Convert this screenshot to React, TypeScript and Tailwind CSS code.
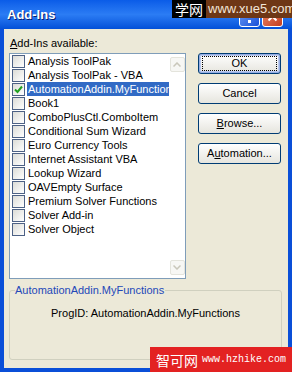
import React from "react";

const items = [
  "Analysis ToolPak",
  "Analysis ToolPak - VBA",
  "AutomationAddin.MyFunctions",
  "Book1",
  "ComboPlusCtl.ComboItem",
  "Conditional Sum Wizard",
  "Euro Currency Tools",
  "Internet Assistant VBA",
  "Lookup Wizard",
  "OAVEmpty Surface",
  "Premium Solver Functions",
  "Solver Add-in",
  "Solver Object",
];

function CheckBox({ checked }: { checked?: boolean }) {
  return (
    <div className="w-[13px] h-[13px] shrink-0 border border-[#4d6185] bg-gradient-to-br from-[#dcdcd7] to-white flex items-center justify-center">
      {checked && (
        <svg width="9" height="9" viewBox="0 0 9 9">
          <path d="M1 4.5 L3.5 7 L8 1.5" stroke="#21a121" strokeWidth="2" fill="none" />
        </svg>
      )}
    </div>
  );
}

function XpButton({ children, primary }: { children: React.ReactNode; primary?: boolean }) {
  return (
    <div
      className={`h-[21px] w-[83px] rounded-[3px] border border-[#003c74] bg-gradient-to-b from-white to-[#e6e5de] flex items-center justify-center text-[11px] text-black ${
        primary ? "shadow-[inset_0_0_0_1px_#97aee2,inset_0_0_0_2px_#bccbef]" : ""
      }`}
    >
      {primary ? (
        <div className="w-[75px] h-[15px] border border-dotted border-black flex items-center justify-center">
          {children}
        </div>
      ) : (
        children
      )}
    </div>
  );
}

function ScrollArrow({ up }: { up?: boolean }) {
  return (
    <div className="w-[15px] h-[15px] rounded-[2px] border border-[#e4e4dc] bg-[#f7f7f4] flex items-center justify-center">
      <svg width="8" height="5" viewBox="0 0 8 5">
        <path d={up ? "M0.5 4.5 L4 1 L7.5 4.5" : "M0.5 0.5 L4 4 L7.5 0.5"} stroke="#c9c7ba" strokeWidth="1.5" fill="none" />
      </svg>
    </div>
  );
}

export default function App() {
  return (
    <div
      className="relative w-[292px] h-[372px] overflow-hidden bg-[#0a4fd8] flex flex-col text-[11px] text-black"
      style={{ fontFamily: '"Liberation Sans", Arial, sans-serif' }}
    >
      {/* title bar */}
      <div className="h-[29px] shrink-0 bg-gradient-to-b from-[#0a5ce8] via-[#2b7cf4] to-[#0350d8] flex items-center px-[7px] justify-between">
        <span className="text-white font-bold text-[13px] [text-shadow:1px_1px_0_#0a1e6e] mt-[1px]">Add-Ins</span>
        <div className="flex gap-[2px] mt-[4px] mr-[2px]">
          <div className="w-[21px] h-[21px] rounded-[3px] border border-white bg-gradient-to-br from-[#6d9cf5] to-[#1a50d8] flex items-end justify-center pb-[3px]">
            <div className="w-[3px] h-[3px] bg-white" />
          </div>
          <div className="w-[21px] h-[21px] rounded-[3px] border border-white bg-gradient-to-br from-[#e8876a] to-[#c43c1a] flex items-center justify-center">
            <svg width="11" height="11" viewBox="0 0 11 11">
              <path d="M1.5 1.5 L9.5 9.5 M9.5 1.5 L1.5 9.5" stroke="white" strokeWidth="2" />
            </svg>
          </div>
        </div>
      </div>

      {/* body */}
      <div className="flex-1 mx-[4px] mb-[4px] bg-[#ece9d8] px-[5px] pt-[8px] flex flex-col">
        <div className="leading-[13px] ml-[1px]">
          <span className="underline">A</span>dd-Ins available:
        </div>
        <div className="flex mt-[3px] gap-[12px]">
          {/* list */}
          <div className="w-[177px] h-[226px] border border-[#7f9db9] bg-white flex">
            <div className="flex-1 overflow-hidden pl-[2px]">
              {items.map((it, i) => (
                <div key={it} className="h-[14px] flex items-center whitespace-nowrap">
                  <CheckBox checked={i === 2} />
                  <span
                    className={`ml-[2px] pl-[1px] pr-[2px] h-[14px] leading-[14px] ${
                      i === 2 ? "bg-[#316ac5] text-white" : ""
                    }`}
                  >
                    {it}
                  </span>
                </div>
              ))}
            </div>
            <div className="w-[16px] shrink-0 flex flex-col justify-between items-center py-[3px]">
              <ScrollArrow up />
              <ScrollArrow />
            </div>
          </div>
          {/* buttons */}
          <div className="flex flex-col gap-[9px]">
            <XpButton primary>OK</XpButton>
            <XpButton>Cancel</XpButton>
            <XpButton>
              <span>
                <span className="underline">B</span>rowse...
              </span>
            </XpButton>
            <XpButton>
              <span>
                A<span className="underline">u</span>tomation...
              </span>
            </XpButton>
          </div>
        </div>

        {/* group box */}
        <div className="relative mt-[11px] w-[273px] h-[70px] border border-[#d0d0bf] rounded-[3px] flex flex-col items-center pt-[14px]">
          <span className="absolute -top-[8px] left-[5px] bg-[#ece9d8] text-[#2348b8] leading-[14px] pr-[1px]">
            AutomationAddin.MyFunctions
          </span>
          <span>ProgID: AutomationAddin.MyFunctions</span>
        </div>
      </div>

      {/* watermarks */}
      <div className="absolute top-0 left-[172px] h-[18px] flex items-center whitespace-nowrap">
        <div
          className="h-full bg-black text-white text-[14px] leading-[18px] px-[3px]"
          style={{ fontFamily: '"Noto Sans CJK SC", sans-serif' }}
        >
          学网
        </div>
        <div className="h-full bg-[#6e3716] text-[#f2e6d8] text-[13px] leading-[18px] px-[2px]">www.xue5.com</div>
      </div>
      <div className="absolute left-[150px] top-[347px] w-[142px] h-[25px] bg-[#e32222] flex items-center pl-[6px] gap-[4px] text-white whitespace-nowrap">
        <span className="text-[14px] leading-[20px]" style={{ fontFamily: '"Noto Sans CJK SC", sans-serif' }}>
          智可网
        </span>
        <span className="text-[10px]" style={{ fontFamily: '"Liberation Mono", monospace' }}>
          www.hzhike.com
        </span>
      </div>
    </div>
  );
}
